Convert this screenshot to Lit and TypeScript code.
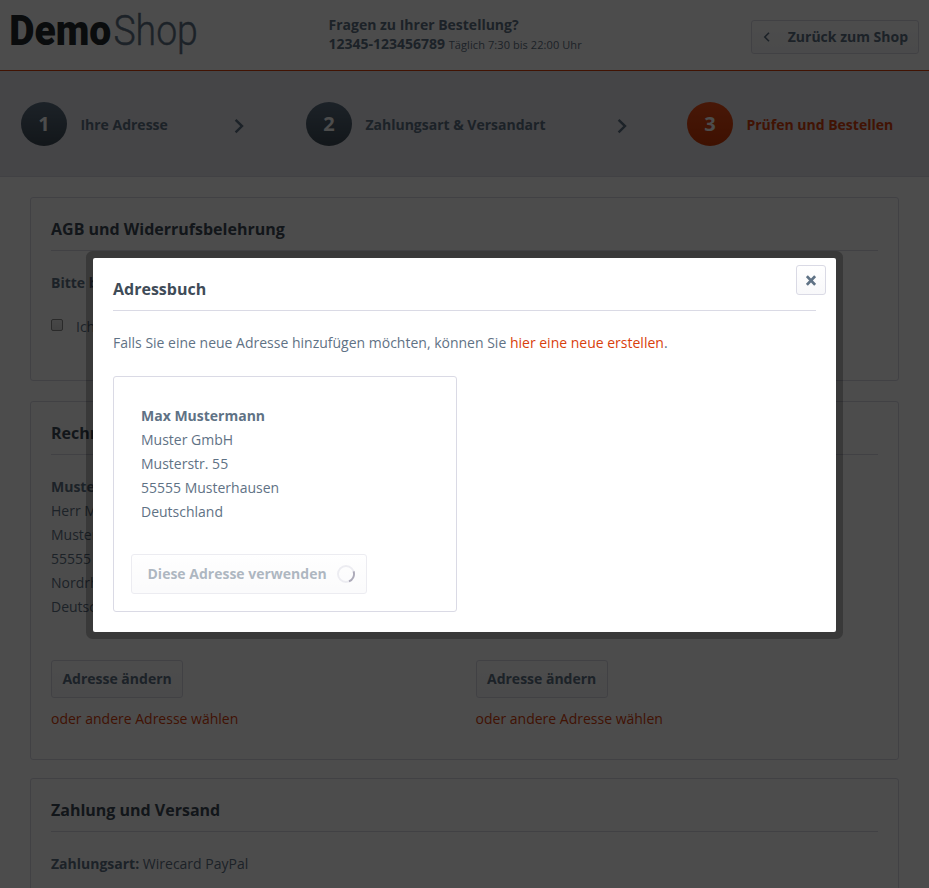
import { LitElement, html, css, svg } from "lit";
import { customElement, property } from "lit/decorators.js";
import { classMap } from "lit/directives/class-map.js";

const base = css`
  * {
    box-sizing: border-box;
  }
  h2,
  p {
    margin: 0;
  }
  button {
    font: inherit;
    margin: 0;
  }
  a {
    color: #d9400b;
    text-decoration: none;
  }
`;

const chevron = svg`<path d="M1.6 .9 8 7.1 1.6 13.3" fill="none" stroke="currentColor" stroke-width="2.4"/>`;

@customElement("shop-header")
class ShopHeader extends LitElement {
  static styles = [
    base,
    css`
      :host {
        display: flex;
        height: 71px;
        border-bottom: 1px solid #d9400b;
        background: #fff;
        padding: 0 10px;
      }
      .logo {
        width: 318px;
        height: 70px;
      }
      .bold {
        font: 900 42px Roboto, sans-serif;
        fill: #24292d;
      }
      .thin {
        font: 300 42px Roboto, sans-serif;
        fill: #5f7285;
        stroke: #5f7285;
        stroke-width: 0.4;
      }
      .service {
        padding: 15px 0 0 0.5px;
        font-weight: 700;
        line-height: 19px;
        flex: 1;
      }
      .hours {
        font-size: 11px;
        font-weight: 400;
        letter-spacing: 0.08px;
      }
      .back {
        display: flex;
        align-items: center;
        justify-content: space-between;
        width: 168px;
        height: 34px;
        margin-top: 20px;
        padding: 0 10px 0 11px;
        border: 1px solid #dadae5;
        border-radius: 3px;
        background: linear-gradient(#fff, #f8f8fa);
        color: #5f7285;
        font-weight: 700;
      }
    `,
  ];
  render() {
    return html`
      <svg class="logo" viewBox="10 0 318 70">
        <text class="bold" x="9.2" y="45.3" textLength="102" lengthAdjust="spacingAndGlyphs">Demo</text>
        <text class="thin" x="113.4" y="45.3" textLength="84.5" lengthAdjust="spacingAndGlyphs">Shop</text>
      </svg>
      <div class="service">
        <div>Fragen zu Ihrer Bestellung?</div>
        <div>12345-123456789 <span class="hours">Täglich 7:30 bis 22:00 Uhr</span></div>
      </div>
      <button class="back">
        <svg width="8" height="10" viewBox="0 0 8 10">
          <path d="M6 .8 1.8 5 6 9.2" fill="none" stroke="currentColor" stroke-width="1.6" />
        </svg>
        <span>Zurück zum Shop</span>
      </button>
    `;
  }
}

@customElement("step-bar")
class StepBar extends LitElement {
  static styles = [
    base,
    css`
      :host {
        display: grid;
        grid-template-columns: 213px 72px 311px 70px auto;
        align-items: start;
        height: 106px;
        padding: 31px 0 0 21px;
        background: #e6e6ed;
        border-bottom: 1px solid #dadae5;
      }
      .step {
        display: flex;
        height: 44px;
        gap: 13.4px;
        font-weight: 700;
        line-height: 46px;
        white-space: nowrap;
      }
      .badge {
        width: 46px;
        border-radius: 50%;
        background: linear-gradient(#5f7285, #3f4c58);
        color: #fff;
        text-align: center;
        font-size: 20px;
        line-height: 44px;
      }
      .active {
        color: #d9400b;
      }
      .active .badge {
        background: linear-gradient(#f0501a, #cf3a05);
      }
      .arrow {
        width: 10px;
        height: 15px;
        margin-top: 17px;
      }
    `,
  ];
  render() {
    const steps = ["Ihre Adresse", "Zahlungsart & Versandart", "Prüfen und Bestellen"];
    return steps.map(
      (label, i) => html`
        ${i ? html`<svg class="arrow" viewBox="0 0 10 15">${chevron}</svg>` : ""}
        <div class=${classMap({ step: true, active: i === 2 })}>
          <span class="badge">${i + 1}</span><span>${label}</span>
        </div>
      `
    );
  }
}

@customElement("shop-panel")
class ShopPanel extends LitElement {
  @property() heading = "";
  static styles = [
    base,
    css`
      :host {
        display: block;
        box-sizing: border-box;
        border: 1px solid #dadae5;
        border-radius: 3px;
        padding: 21px 20px 0;
      }
      .title {
        height: 32px;
        margin-bottom: 20px;
        border-bottom: 1px solid #dadae5;
        color: #3f4c58;
        font-size: 16px;
        font-weight: 700;
        line-height: 20px;
      }
    `,
  ];
  render() {
    return html`<h2 class="title">${this.heading}</h2><slot></slot>`;
  }
}

@customElement("address-dialog")
class AddressDialog extends LitElement {
  static styles = [
    base,
    css`
      :host {
        display: block;
        box-sizing: border-box;
        position: relative;
        width: 743px;
        height: 374px;
        padding: 21px 20px 0;
        border-radius: 2px;
        background: #fff;
        box-shadow: 0 0 0 7px rgba(0, 0, 0, 0.25);
      }
      .title {
        height: 32px;
        border-bottom: 1px solid #dadae5;
        color: #3f4c58;
        font-size: 16px;
        font-weight: 700;
        line-height: 20px;
      }
      .hint {
        margin: 20px 0 21px;
      }
      .close {
        position: absolute;
        top: 7px;
        right: 10px;
        display: grid;
        place-items: center;
        width: 30px;
        height: 30px;
        padding: 1px 0 0;
        border: 1px solid #dadae5;
        border-radius: 3px;
        background: linear-gradient(#fff, #f8f8fa);
        color: #5f7285;
      }
      .card {
        width: 344px;
        height: 236px;
        padding: 27px 17px 0;
        border: 1px solid #dadae5;
        border-radius: 3px;
      }
      .address {
        padding-left: 10px;
        margin-bottom: 30px;
      }
      .use {
        display: flex;
        align-items: center;
        justify-content: space-between;
        width: 236px;
        height: 40px;
        padding: 0 11px 0 15.5px;
        border: 1px solid #dadae5;
        border-radius: 3px;
        background: linear-gradient(#fff, #f8f8fa);
        color: #5f7285;
        font-weight: 700;
        opacity: 0.5;
      }
    `,
  ];
  render() {
    return html`
      <h2 class="title">Adressbuch</h2>
      <button class="close" aria-label="Schließen">
        <svg width="10" height="11" viewBox="0 0 10 11">
          <path d="M.9 1.2 9.1 9.8M9.1 1.2 .9 9.8" stroke="currentColor" stroke-width="2.6" />
        </svg>
      </button>
      <p class="hint">
        Falls Sie eine neue Adresse hinzufügen möchten, können Sie <a href="#">hier eine neue erstellen</a>.
      </p>
      <div class="card">
        <div class="address">
          <b>Max Mustermann</b><br />Muster GmbH<br />Musterstr. 55<br />55555 Musterhausen<br />Deutschland
        </div>
        <button class="use">
          <span>Diese Adresse verwenden</span>
          <svg width="18" height="18" viewBox="0 0 18 18" fill="none" stroke-width="1.9">
            <circle cx="9" cy="9" r="8" stroke="#dadae5" />
            <path d="M16.6 6.4A8 8 0 0 1 12 16.4" stroke="#5c5874" />
          </svg>
        </button>
      </div>
    `;
  }
}

@customElement("app-root")
class AppRoot extends LitElement {
  static styles = [
    base,
    css`
      :host {
        display: block;
        position: relative;
        height: 888px;
        overflow: hidden;
        background: #fff;
        color: #5f7285;
        font: 14px/24px "Open Sans", sans-serif;
      }
      .content {
        display: flex;
        flex-direction: column;
        padding: 20px 30px 0;
      }
      .terms {
        height: 184px;
        margin-bottom: 20px;
      }
      .addresses {
        height: 359px;
        margin-bottom: 18px;
      }
      .payment {
        height: 160px;
      }
      .accept {
        display: flex;
        gap: 13px;
        margin-top: 20px;
      }
      .box {
        width: 12px;
        height: 12px;
        margin-top: 4px;
        border: 1px solid #8c8c8c;
        border-radius: 2px;
        background: linear-gradient(#eee, #ddd);
      }
      .columns {
        display: grid;
        grid-template-columns: 424.6px 1fr;
      }
      .change {
        display: block;
        height: 38px;
        margin: 41px 0 9px;
        padding: 0 10.4px;
        border: 1px solid #dadae5;
        border-radius: 3px;
        background: linear-gradient(#fff, #f8f8fa);
        color: #5f7285;
        font-weight: 700;
      }
      .overlay {
        position: absolute;
        inset: 0;
        display: flex;
        justify-content: center;
        align-items: flex-start;
        padding-top: 258px;
        background: rgba(0, 0, 0, 0.7);
      }
    `,
  ];
  private address() {
    return html`<div>
      <b>Muster GmbH</b><br />Herr Max Mustermann<br />Musterstr. 55<br />55555 Musterhausen<br />Nordrhein-Westfalen<br />Deutschland
      <button class="change">Adresse ändern</button>
      <a href="#">oder andere Adresse wählen</a>
    </div>`;
  }
  render() {
    return html`
      <shop-header></shop-header>
      <step-bar></step-bar>
      <main class="content">
        <shop-panel class="terms" heading="AGB und Widerrufsbelehrung">
          <b>Bitte beachten Sie unsere Widerrufsbelehrung.</b>
          <div class="accept"><span class="box"></span><span>Ich habe die AGB gelesen und akzeptiere sie.</span></div>
        </shop-panel>
        <shop-panel class="addresses" heading="Rechnungs- und Lieferadresse">
          <div class="columns">${this.address()}${this.address()}</div>
        </shop-panel>
        <shop-panel class="payment" heading="Zahlung und Versand">
          <b>Zahlungsart:</b> Wirecard PayPal
        </shop-panel>
      </main>
      <div class="overlay"><address-dialog></address-dialog></div>
    `;
  }
}
